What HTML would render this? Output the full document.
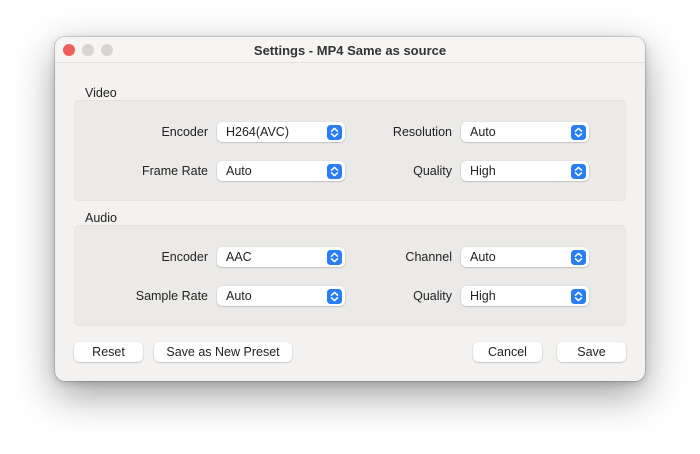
<!DOCTYPE html>
<html><head><meta charset="utf-8"><style>
*{margin:0;padding:0;box-sizing:border-box}
body{width:700px;height:454px;background:#fff;font-family:"Liberation Sans",sans-serif;position:relative;overflow:hidden;color:#222}
.win{position:absolute;left:55px;top:37px;width:590px;height:344px;background:#f3f2f0;border-radius:10px;box-shadow:0 14px 40px rgba(0,0,0,.38),0 2px 8px rgba(0,0,0,.15),0 0 0 1px rgba(0,0,0,.14)}
.tb{position:absolute;left:0;top:0;width:590px;height:26px;border-bottom:1px solid #e2e1df;border-radius:10px 10px 0 0;background:#f6f5f3}
.dot{position:absolute;top:7px;width:12px;height:12px;border-radius:50%;background:#d6d5d4}
.title{position:absolute;left:0;width:590px;top:6px;text-align:center;font-size:13px;font-weight:bold;color:#333}
.lbl{position:absolute;font-size:12.5px;color:#222}
.box{position:absolute;left:19px;width:552px;height:101px;background:#ebeae8;border-radius:5px;border:1px solid #e4e3e1}
.r{position:absolute;font-size:12.5px;text-align:right;width:120px}
.pop{position:absolute;width:128px;height:20px;background:#fff;border-radius:5px;box-shadow:0 0.5px 1.5px rgba(0,0,0,.3);font-size:12.5px;padding:3px 0 0 9px}
.pop svg{position:absolute;right:3px;top:2.5px}
.btn{position:absolute;top:305px;height:20px;background:#fff;border-radius:5px;box-shadow:0 0.5px 1.5px rgba(0,0,0,.3);font-size:12.5px;text-align:center;padding-top:3px}
</style></head><body>
<div class="win">
<div class="tb">
<div class="dot" style="left:8px;background:#ed5f57"></div>
<div class="dot" style="left:27px"></div>
<div class="dot" style="left:46px"></div>
<div class="title">Settings - MP4 Same as source</div>
</div>
<div class="lbl" style="left:30px;top:49px">Video</div>
<div class="box" style="top:63px"></div>
<div class="lbl" style="left:30px;top:174px">Audio</div>
<div class="box" style="top:188px"></div>

<div class="r" style="left:33px;top:88px">Encoder</div>
<div class="r" style="left:33px;top:127px">Frame Rate</div>
<div class="r" style="left:277px;top:88px">Resolution</div>
<div class="r" style="left:277px;top:127px">Quality</div>
<div class="r" style="left:33px;top:213px">Encoder</div>
<div class="r" style="left:33px;top:252px">Sample Rate</div>
<div class="r" style="left:277px;top:213px">Channel</div>
<div class="r" style="left:277px;top:252px">Quality</div>

<div class="pop" style="left:162px;top:85px">H264(AVC)<svg width="15" height="15"><rect width="15" height="15" rx="3.5" fill="#2a7ef5"/><path d="M4.5 6.2L7.5 3.4L10.5 6.2M4.5 8.8L7.5 11.6L10.5 8.8" stroke="#fff" stroke-width="1.5" fill="none" stroke-linecap="round" stroke-linejoin="round"/></svg></div>
<div class="pop" style="left:162px;top:124px">Auto<svg width="15" height="15"><rect width="15" height="15" rx="3.5" fill="#2a7ef5"/><path d="M4.5 6.2L7.5 3.4L10.5 6.2M4.5 8.8L7.5 11.6L10.5 8.8" stroke="#fff" stroke-width="1.5" fill="none" stroke-linecap="round" stroke-linejoin="round"/></svg></div>
<div class="pop" style="left:406px;top:85px">Auto<svg width="15" height="15"><rect width="15" height="15" rx="3.5" fill="#2a7ef5"/><path d="M4.5 6.2L7.5 3.4L10.5 6.2M4.5 8.8L7.5 11.6L10.5 8.8" stroke="#fff" stroke-width="1.5" fill="none" stroke-linecap="round" stroke-linejoin="round"/></svg></div>
<div class="pop" style="left:406px;top:124px">High<svg width="15" height="15"><rect width="15" height="15" rx="3.5" fill="#2a7ef5"/><path d="M4.5 6.2L7.5 3.4L10.5 6.2M4.5 8.8L7.5 11.6L10.5 8.8" stroke="#fff" stroke-width="1.5" fill="none" stroke-linecap="round" stroke-linejoin="round"/></svg></div>
<div class="pop" style="left:162px;top:210px">AAC<svg width="15" height="15"><rect width="15" height="15" rx="3.5" fill="#2a7ef5"/><path d="M4.5 6.2L7.5 3.4L10.5 6.2M4.5 8.8L7.5 11.6L10.5 8.8" stroke="#fff" stroke-width="1.5" fill="none" stroke-linecap="round" stroke-linejoin="round"/></svg></div>
<div class="pop" style="left:162px;top:249px">Auto<svg width="15" height="15"><rect width="15" height="15" rx="3.5" fill="#2a7ef5"/><path d="M4.5 6.2L7.5 3.4L10.5 6.2M4.5 8.8L7.5 11.6L10.5 8.8" stroke="#fff" stroke-width="1.5" fill="none" stroke-linecap="round" stroke-linejoin="round"/></svg></div>
<div class="pop" style="left:406px;top:210px">Auto<svg width="15" height="15"><rect width="15" height="15" rx="3.5" fill="#2a7ef5"/><path d="M4.5 6.2L7.5 3.4L10.5 6.2M4.5 8.8L7.5 11.6L10.5 8.8" stroke="#fff" stroke-width="1.5" fill="none" stroke-linecap="round" stroke-linejoin="round"/></svg></div>
<div class="pop" style="left:406px;top:249px">High<svg width="15" height="15"><rect width="15" height="15" rx="3.5" fill="#2a7ef5"/><path d="M4.5 6.2L7.5 3.4L10.5 6.2M4.5 8.8L7.5 11.6L10.5 8.8" stroke="#fff" stroke-width="1.5" fill="none" stroke-linecap="round" stroke-linejoin="round"/></svg></div>

<div class="btn" style="left:19px;width:69px">Reset</div>
<div class="btn" style="left:99px;width:138px">Save as New Preset</div>
<div class="btn" style="left:418px;width:69px">Cancel</div>
<div class="btn" style="left:502px;width:69px">Save</div>
</div>
</body></html>
